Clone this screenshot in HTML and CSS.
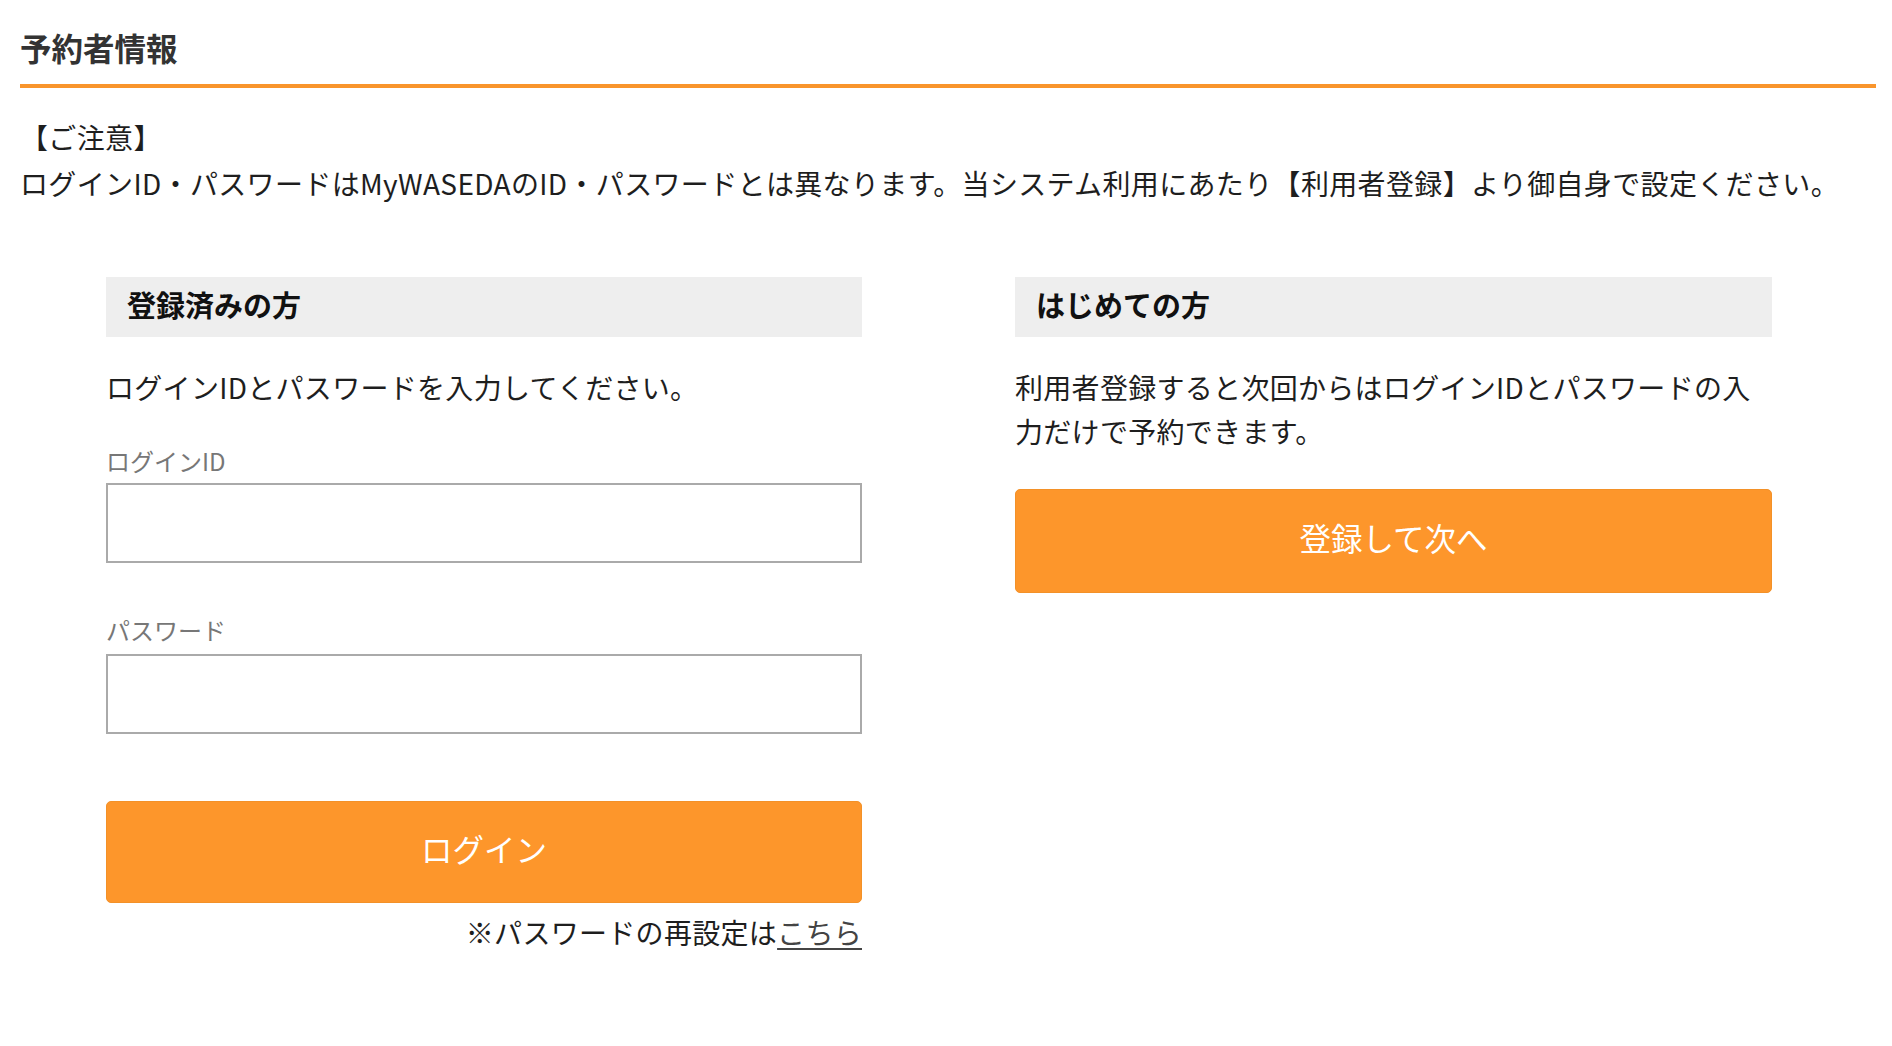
FILE: index.html
```html
<!DOCTYPE html>
<html lang="ja">
<head>
<meta charset="utf-8">
<title>予約者情報</title>
<link rel="stylesheet" href="styles.css">
</head>
<body>
<div class="page">
  <h1 class="page-title">予約者情報</h1>
  <p class="notice">【ご注意】<br>ログインID・パスワードはMyWASEDAのID・パスワードとは異なります。当システム利用にあたり【利用者登録】より御自身で設定ください。</p>
  <div class="columns">
    <section class="panel">
      <h2 class="panel-head">登録済みの方</h2>
      <p class="panel-text">ログインIDとパスワードを入力してください。</p>
      <label class="field-label" for="login-id">ログインID</label>
      <input class="field-input" id="login-id" type="text">
      <label class="field-label field-label-second" for="password">パスワード</label>
      <input class="field-input" id="password" type="password">
      <button class="btn btn-login" type="button">ログイン</button>
      <p class="reset">※パスワードの再設定は<a class="reset-link" href="#">こちら</a></p>
    </section>
    <section class="panel">
      <h2 class="panel-head">はじめての方</h2>
      <p class="panel-text panel-text-narrow">利用者登録すると次回からはログインIDとパスワードの入力だけで予約できます。</p>
      <button class="btn btn-register" type="button">登録して次へ</button>
    </section>
  </div>
</div>
</body>
</html>
```

FILE: styles.css
```css
html, body {
  margin: 0;
  padding: 0;
  background: #ffffff;
}

body {
  font-family: "Noto Sans CJK JP", "Noto Sans", sans-serif;
  color: #1e1e1e;
}

.page {
  padding: 0 16px 0 20px;
}

.page-title {
  margin: 0;
  padding: 27px 0 17px;
  font-size: 31.5px;
  line-height: 40px;
  font-weight: 700;
  color: #333333;
  border-bottom: 4px solid #f9952c;
}

.notice {
  margin: 26px 0 0;
  font-size: 28px;
  line-height: 46px;
  letter-spacing: 0.35px;
}

.columns {
  display: grid;
  grid-template-columns: 756px 757px;
  column-gap: 153px;
  margin-top: 71px;
  padding-left: 86px;
}

.panel {
  display: flex;
  flex-direction: column;
}

.panel-head {
  box-sizing: border-box;
  margin: 0;
  height: 60px;
  padding: 0 0 5px 21px;
  background: #eeeeee;
  font-size: 29px;
  line-height: 55px;
  font-weight: 700;
  color: #111111;
}

.panel-text {
  margin: 28px 0 0;
  font-size: 28px;
  line-height: 44px;
  letter-spacing: 0.3px;
}

.panel-text-narrow {
  padding-right: 20px;
}

.field-label {
  margin-top: 37px;
  font-size: 24px;
  line-height: 30px;
  color: #777777;
}

.field-label-second {
  margin-top: 52px;
}

.field-input {
  box-sizing: border-box;
  width: 100%;
  height: 80px;
  margin: 7px 0 0;
  border: 2px solid #aaaaaa;
  border-radius: 0;
  background: #ffffff;
  font-size: 24px;
  padding: 0 12px;
}

.field-label-second + .field-input {
  margin-top: 9px;
}

.btn {
  box-sizing: border-box;
  width: 100%;
  border: 1px solid #f39128;
  border-radius: 5px;
  background: #fd962b;
  color: #ffffff;
  font-family: "Noto Sans CJK JP", "Noto Sans", sans-serif;
  font-size: 31.5px;
  font-weight: 400;
  padding: 0 0 8px;
  cursor: pointer;
}

.btn-login {
  height: 102px;
  margin-top: 67px;
}

.btn-register {
  height: 104px;
  margin-top: 36px;
}

.reset {
  margin: 7px 0 0;
  text-align: right;
  font-size: 28px;
  line-height: 44px;
  letter-spacing: 0.3px;
}

.reset-link {
  color: #444444;
  text-decoration: underline;
  text-underline-offset: 4px;
}
```
